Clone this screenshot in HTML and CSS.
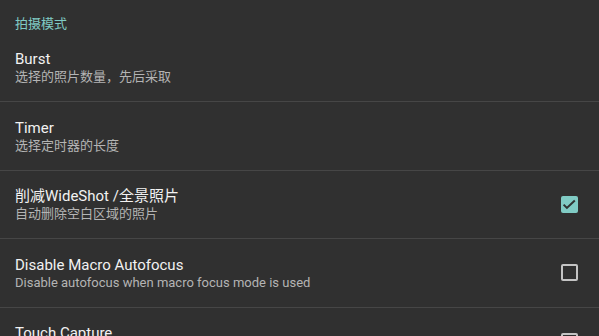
FILE: index.html
```html
<!DOCTYPE html>
<html lang="zh-CN">
<head>
<meta charset="utf-8">
<title>拍摄模式</title>
<link rel="stylesheet" href="styles.css">
</head>
<body>
<div class="screen">
  <div class="category">拍摄模式</div>

  <div class="pref">
    <div class="texts">
      <div class="title">Burst</div>
      <div class="summary">选择的照片数量，先后采取</div>
    </div>
  </div>

  <div class="pref">
    <div class="texts">
      <div class="title">Timer</div>
      <div class="summary">选择定时器的长度</div>
    </div>
  </div>

  <div class="pref">
    <div class="texts">
      <div class="title">削减WideShot /全景照片</div>
      <div class="summary">自动删除空白区域的照片</div>
    </div>
    <div class="checkbox checked">
      <svg viewBox="0 0 17 17" width="17" height="17"><path d="M2.6 8.6 L5.9 11.9 L13.8 4.4" fill="none" stroke="#2f3332" stroke-width="2"/></svg>
    </div>
  </div>

  <div class="pref">
    <div class="texts">
      <div class="title">Disable Macro Autofocus</div>
      <div class="summary">Disable autofocus when macro focus mode is used</div>
    </div>
    <div class="checkbox"></div>
  </div>

  <div class="pref">
    <div class="texts">
      <div class="title">Touch Capture</div>
    </div>
    <div class="checkbox"></div>
  </div>
</div>
</body>
</html>
```

FILE: styles.css
```css
html, body {
  margin: 0;
  padding: 0;
  background: #303030;
  overflow: hidden;
}

.screen {
  width: 599px;
  height: 336px;
  overflow: hidden;
  background: #303030;
  font-family: Roboto, "Noto Sans CJK SC", sans-serif;
}

.category {
  box-sizing: border-box;
  height: 33.5px;
  padding: 16px 15px 0;
  font-size: 13px;
  line-height: 16px;
  color: #80cbc4;
}

.pref {
  box-sizing: content-box;
  height: 67.5px;
  border-bottom: 1px solid #464646;
  padding: 0 21px 0 15px;
  display: flex;
  align-items: center;
  justify-content: space-between;
}

.texts {
  display: flex;
  flex-direction: column;
  height: 36px;
}

.title {
  font-size: 15px;
  line-height: 20px;
  color: #f2f2f2;
}

.summary {
  font-size: 13px;
  line-height: 16px;
  color: #b4b4b4;
}

.checkbox {
  box-sizing: border-box;
  width: 17px;
  height: 17px;
  border: 2px solid #c4c4c4;
  border-radius: 2px;
  flex-shrink: 0;
}

.checkbox.checked {
  border: none;
  background: #80cbc4;
}

.checkbox svg {
  display: block;
}
```
